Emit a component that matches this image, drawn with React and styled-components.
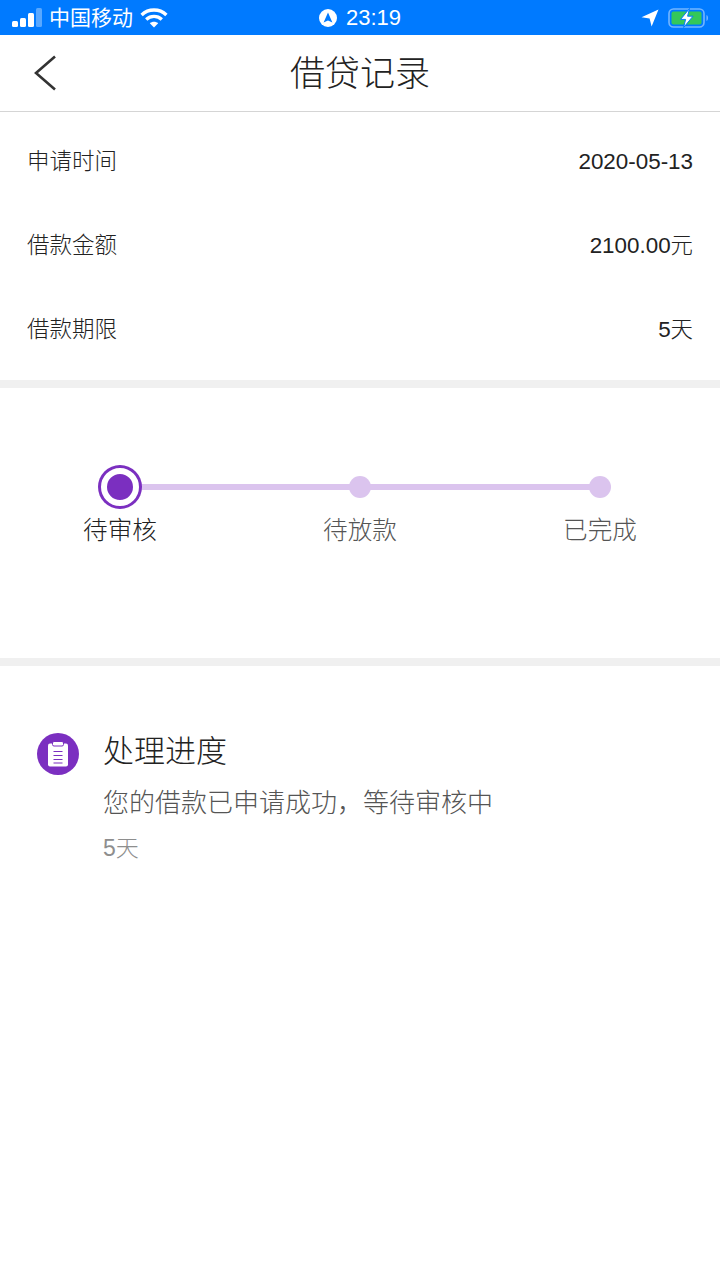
import React from "react";
import styled, { createGlobalStyle } from "styled-components";

const GlobalStyle = createGlobalStyle`
  html, body {
    margin: 0;
    padding: 0;
    background: #fff;
    font-family: "Liberation Sans", "Noto Sans CJK SC", sans-serif;
  }
`;

const infoRows = [
  { label: "申请时间", value: "2020-05-13" },
  { label: "借款金额", value: "2100.00元" },
  { label: "借款期限", value: "5天" },
];

const steps = ["待审核", "待放款", "已完成"];

function Signal() {
  return (
    <svg width="30" height="20" viewBox="0 0 30 20">
      <rect x="0" y="13" width="6" height="6" rx="1.5" fill="#fff" />
      <rect x="8" y="10" width="6" height="9" rx="1.5" fill="#fff" />
      <rect x="16" y="5" width="6" height="14" rx="1.5" fill="#fff" />
      <rect x="24" y="0" width="6" height="19" rx="1.5" fill="#fff" opacity="0.35" />
    </svg>
  );
}

function Wifi() {
  return (
    <svg width="28" height="20" viewBox="0 0 28 20" fill="none" stroke="#fff" strokeWidth="3.4">
      <path d="M1.6 7 C8.5 0.4 19.5 0.4 26.4 7" />
      <path d="M6.2 11.4 C10.6 7.4 17.4 7.4 21.8 11.4" />
      <path d="M14 19.6 L9.8 15.2 C12.2 13.2 15.8 13.2 18.2 15.2 Z" fill="#fff" stroke="none" />
    </svg>
  );
}

function LocationBadge() {
  return (
    <svg width="18" height="18" viewBox="0 0 18 18">
      <circle cx="9" cy="9" r="9" fill="#fff" />
      <path d="M9 3.6 L13.4 13.6 L9 11.4 L4.6 13.6 Z" fill="#007aff" />
    </svg>
  );
}

function LocationArrow() {
  return (
    <svg width="18" height="18" viewBox="0 0 18 18">
      <path d="M17.5 0.5 L0.5 8.2 L8.6 9.4 L10.6 17.5 Z" fill="#fff" />
    </svg>
  );
}

function Battery() {
  return (
    <svg width="42" height="20" viewBox="0 0 42 20">
      <rect x="1" y="1" width="35" height="18" rx="4.5" fill="none" stroke="#fff" strokeOpacity="0.45" strokeWidth="1.6" />
      <rect x="3.5" y="3.5" width="30" height="13" rx="2" fill="#34c759" />
      <path d="M38.5 7 C40.4 7.6 40.4 12.4 38.5 13 Z" fill="#fff" fillOpacity="0.5" />
      <path d="M21.5 0.5 L12.6 11.4 L17.6 11.4 L15.6 19.5 L25 8.2 L19.6 8.2 Z" fill="#fff" stroke="#007aff" strokeWidth="1" />
    </svg>
  );
}

function BackIcon() {
  return (
    <svg width="24" height="36" viewBox="0 0 24 36" fill="none" stroke="#333" strokeWidth="2.6">
      <path d="M22 1.5 L3 18 L22 34.5" />
    </svg>
  );
}

function ClipboardIcon() {
  return (
    <svg width="20" height="26" viewBox="0 0 20 26">
      <rect x="0" y="2.5" width="20" height="23" rx="2" fill="#fff" />
      <rect x="4.5" y="0.5" width="11" height="4.5" rx="1.5" fill="#fff" stroke="#7b2fc0" strokeWidth="1" />
      <path d="M5.5 10.5 H14.5 M5.5 14.5 H14.5 M5.5 18.5 H14.5 M5.5 22 H14.5" stroke="#7b2fc0" strokeWidth="1.2" />
    </svg>
  );
}

export default function App() {
  return (
    <Page>
      <GlobalStyle />
      <StatusBar>
        <StatusSide>
          <Signal />
          <Carrier>中国移动</Carrier>
          <Wifi />
        </StatusSide>
        <StatusCenter>
          <LocationBadge />
          <Clock>23:19</Clock>
        </StatusCenter>
        <StatusSide $right>
          <LocationArrow />
          <Battery />
        </StatusSide>
      </StatusBar>

      <NavBar>
        <BackButton>
          <BackIcon />
        </BackButton>
        <NavTitle>借贷记录</NavTitle>
      </NavBar>

      <InfoList>
        {infoRows.map((row) => (
          <InfoRow key={row.label}>
            <InfoLabel>{row.label}</InfoLabel>
            <InfoValue>{row.value}</InfoValue>
          </InfoRow>
        ))}
      </InfoList>

      <StepSection>
        <StepList>
          {steps.map((step, i) => (
            <Step key={step} $first={i === 0} $last={i === steps.length - 1}>
              <DotSlot>{i === 0 ? <ActiveDot /> : <Dot />}</DotSlot>
              <StepLabel $active={i === 0}>{step}</StepLabel>
            </Step>
          ))}
        </StepList>
      </StepSection>

      <ProgressSection>
        <ProgressIcon>
          <ClipboardIcon />
        </ProgressIcon>
        <ProgressBody>
          <ProgressTitle>处理进度</ProgressTitle>
          <ProgressText>您的借款已申请成功，等待审核中</ProgressText>
          <ProgressTime>5天</ProgressTime>
        </ProgressBody>
      </ProgressSection>
    </Page>
  );
}

const Page = styled.div`
  width: 720px;
  height: 1280px;
  overflow: hidden;
  background: #fff;
  color: #222;
  font-weight: 300;
`;

const StatusBar = styled.div`
  height: 35px;
  background: #007aff;
  color: #fff;
  display: grid;
  grid-template-columns: 1fr auto 1fr;
  align-items: center;
  padding: 0 10px 0 12px;
  box-sizing: border-box;
  font-weight: 400;
`;

const StatusSide = styled.div`
  display: flex;
  align-items: center;
  justify-content: ${(p) => (p.$right ? "flex-end" : "flex-start")};
  gap: ${(p) => (p.$right ? "9px" : "7px")};
`;

const StatusCenter = styled.div`
  display: flex;
  align-items: center;
  gap: 9px;
  margin-left: -2px;
`;

const Carrier = styled.span`
  font-size: 21px;
  line-height: 30px;
`;

const Clock = styled.span`
  font-size: 22px;
`;

const NavBar = styled.div`
  height: 77px;
  border-bottom: 1px solid #d5d5d5;
  box-sizing: border-box;
  position: relative;
  display: flex;
  align-items: center;
  justify-content: center;
  padding-bottom: 5px;
`;

const BackButton = styled.div`
  position: absolute;
  left: 33px;
  top: 20px;
  display: flex;
`;

const NavTitle = styled.div`
  font-size: 35px;
  color: #222;
`;

const InfoList = styled.div`
  padding: 8px 27px;
  border-bottom: 8px solid #f0f0f0;
`;

const InfoRow = styled.div`
  height: 84px;
  display: flex;
  align-items: center;
  justify-content: space-between;
  color: #222;
`;

const InfoLabel = styled.span`
  font-size: 22.5px;
  line-height: 30px;
`;

const InfoValue = styled.span`
  font-size: 22.4px;
  line-height: 30px;
`;

const StepSection = styled.div`
  height: 278px;
  padding-top: 76px;
  box-sizing: border-box;
  border-bottom: 8px solid #f0f0f0;
`;

const StepList = styled.div`
  display: grid;
  grid-template-columns: repeat(3, 240px);
`;

const Step = styled.div`
  position: relative;
  display: flex;
  flex-direction: column;
  align-items: center;
  &::before {
    content: "";
    position: absolute;
    top: 20px;
    left: ${(p) => (p.$first ? "50%" : "0")};
    right: ${(p) => (p.$last ? "50%" : "0")};
    height: 6px;
    background: #dbc4ee;
  }
`;

const DotSlot = styled.div`
  position: relative;
  height: 46px;
  display: flex;
  align-items: center;
  justify-content: center;
`;

const Dot = styled.div`
  width: 22px;
  height: 22px;
  margin-left: -1px;
  border-radius: 50%;
  background: #dbc4ee;
`;

const ActiveDot = styled.div`
  width: 26px;
  height: 26px;
  border-radius: 50%;
  background: #7b2fc0;
  border: 6px solid #fff;
  box-shadow: 0 0 0 3px #7b2fc0;
`;

const StepLabel = styled.div`
  font-size: 24.6px;
  line-height: 36px;
  margin-top: 3px;
  color: ${(p) => (p.$active ? "#222" : "#555")};
`;

const ProgressSection = styled.div`
  display: flex;
  align-items: flex-start;
  padding: 64px 0 0 37px;
  gap: 24px;
`;

const ProgressIcon = styled.div`
  width: 42px;
  height: 42px;
  margin-top: 3px;
  border-radius: 50%;
  background: #7b2fc0;
  display: flex;
  align-items: center;
  justify-content: center;
`;

const ProgressBody = styled.div`
  display: flex;
  flex-direction: column;
`;

const ProgressTitle = styled.div`
  font-size: 31px;
  line-height: 42px;
  margin-top: 1px;
  color: #222;
`;

const ProgressText = styled.div`
  font-size: 26px;
  line-height: 36px;
  margin-top: 12px;
  color: #555;
`;

const ProgressTime = styled.div`
  font-size: 23px;
  line-height: 32px;
  margin-top: 11px;
  color: #8e8e8e;
`;
